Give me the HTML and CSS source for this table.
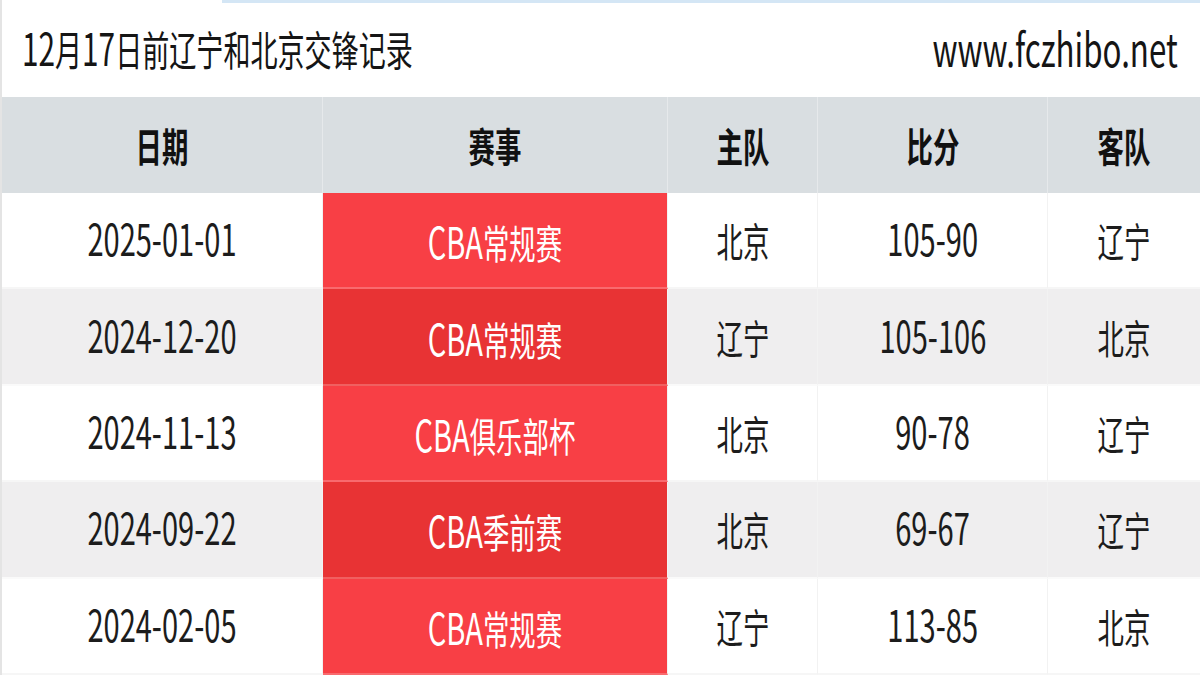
FILE: index.html
```html
<!DOCTYPE html>
<html lang="zh-CN">
<head>
<meta charset="utf-8">
<link rel="stylesheet" href="styles.css">
</head>
<body>
<div class="page">
  <div class="topline"><div class="topline-blue"></div></div>
  <div class="title">
    <span class="sq sq-left"><span class="lat">12</span>月<span class="lat">17</span>日前辽宁和北京交锋记录</span>
    <span class="sq sq-right site">www.fczhibo.net</span>
  </div>
  <div class="table">
    <div class="cell head"><span class="sq">日期</span></div>
    <div class="cell head"><span class="sq">赛事</span></div>
    <div class="cell head"><span class="sq">主队</span></div>
    <div class="cell head"><span class="sq">比分</span></div>
    <div class="cell head last"><span class="sq">客队</span></div>

    <div class="cell"><span class="sq num">2025-01-01</span></div>
    <div class="cell match"><span class="sq"><span class="lat">CBA</span>常规赛</span></div>
    <div class="cell"><span class="sq">北京</span></div>
    <div class="cell"><span class="sq num">105-90</span></div>
    <div class="cell last"><span class="sq">辽宁</span></div>

    <div class="cell alt"><span class="sq num">2024-12-20</span></div>
    <div class="cell match alt"><span class="sq"><span class="lat">CBA</span>常规赛</span></div>
    <div class="cell alt"><span class="sq">辽宁</span></div>
    <div class="cell alt"><span class="sq num">105-106</span></div>
    <div class="cell alt last"><span class="sq">北京</span></div>

    <div class="cell"><span class="sq num">2024-11-13</span></div>
    <div class="cell match"><span class="sq"><span class="lat">CBA</span>俱乐部杯</span></div>
    <div class="cell"><span class="sq">北京</span></div>
    <div class="cell"><span class="sq num">90-78</span></div>
    <div class="cell last"><span class="sq">辽宁</span></div>

    <div class="cell alt"><span class="sq num">2024-09-22</span></div>
    <div class="cell match alt"><span class="sq"><span class="lat">CBA</span>季前赛</span></div>
    <div class="cell alt"><span class="sq">北京</span></div>
    <div class="cell alt"><span class="sq num">69-67</span></div>
    <div class="cell alt last"><span class="sq">辽宁</span></div>

    <div class="cell"><span class="sq num">2024-02-05</span></div>
    <div class="cell match"><span class="sq"><span class="lat">CBA</span>常规赛</span></div>
    <div class="cell"><span class="sq">辽宁</span></div>
    <div class="cell"><span class="sq num">113-85</span></div>
    <div class="cell last"><span class="sq">北京</span></div>
  </div>
</div>
</body>
</html>
```

FILE: styles.css
```css
html, body {
  margin: 0;
  padding: 0;
  background: #ffffff;
}
body {
  font-family: "Noto Sans CJK SC", "Noto Sans", sans-serif;
  color: #1a1a1a;
}
.page {
  width: 1200px;
  height: 675px;
  display: flex;
  flex-direction: column;
  box-sizing: border-box;
  border-left: 2px solid #e4e4e4;
  overflow: hidden;
}
.topline {
  height: 3px;
  display: flex;
  justify-content: flex-end;
}
.topline-blue {
  width: 978px;
  background: #d4e6f5;
}
.title {
  height: 94px;
  box-sizing: border-box;
  display: flex;
  align-items: center;
  justify-content: space-between;
  padding: 0 22px 6px 20px;
  font-size: 41px;
  color: #151515;
}
.sq {
  display: inline-block;
  transform: scaleX(0.66);
  white-space: nowrap;
  line-height: 1;
}
.sq-left { transform-origin: left center; }
.sq-right { transform-origin: right center; }
.lat { font-size: 1.1em; line-height: 1; }
.site { font-size: 46px; transform: scaleX(0.68); }
.num {
  font-size: 44px;
  transform: translateY(-3px) scaleX(0.66);
}
.table {
  flex: 1;
  display: grid;
  grid-template-columns: 321px 345px 150px 230px 152px;
  grid-template-rows: 96px repeat(5, 1fr);
}
.cell {
  display: flex;
  align-items: center;
  justify-content: center;
  font-size: 40px;
  color: #1c1c1c;
  border-right: 1px solid #f2f2f2;
  border-bottom: 2px solid #f6f6f6;
  box-sizing: border-box;
  background: #ffffff;
}
.cell.last { border-right: none; }
.cell.alt { background: #efeeef; border-bottom-color: #fafafa; }
.cell.head {
  background: #d9dee1;
  font-weight: 700;
  color: #111;
  border-right-color: #e6e9eb;
  border-bottom: none;
}
.cell.match {
  background: #f83f45;
  color: #ffffff;
  border-bottom-color: #f96a6e;
  border-right-color: #f3f3f3;
}
.cell.match.alt {
  background: #e83334;
  border-bottom-color: #f06060;
}
```
